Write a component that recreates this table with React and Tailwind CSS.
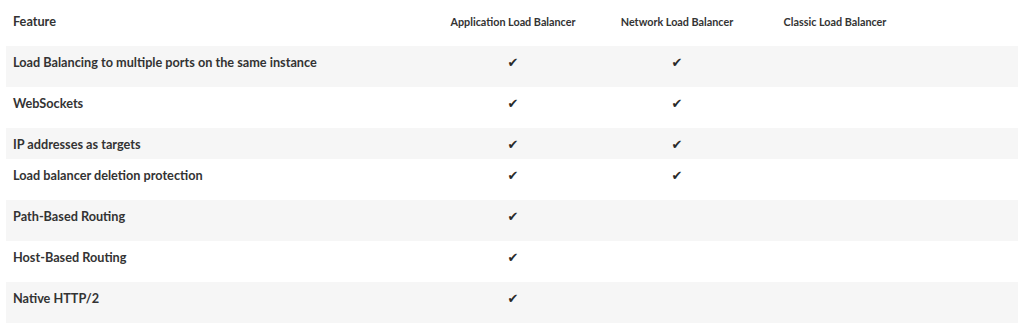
const ROWS = [
  { name: "Load Balancing to multiple ports on the same instance", alb: true, nlb: true, h: "h-[41px]" },
  { name: "WebSockets", alb: true, nlb: true, h: "h-[41px]" },
  { name: "IP addresses as targets", alb: true, nlb: true, h: "h-[31px]" },
  { name: "Load balancer deletion protection", alb: true, nlb: true, h: "h-[41px]" },
  { name: "Path-Based Routing", alb: true, nlb: false, h: "h-[41px]" },
  { name: "Host-Based Routing", alb: true, nlb: false, h: "h-[41px]" },
  { name: "Native HTTP/2", alb: true, nlb: false, h: "h-[41px]" },
];

const COLS = "grid grid-cols-[424px_166px_162px_154px_1fr]";

function Check({ on }) {
  return (
    <div className="text-center">
      {on && <span className="text-[13px] text-[#2a2a2a] font-['DejaVu_Sans',sans-serif]">✔</span>}
    </div>
  );
}

export default function App() {
  return (
    <main className="w-[1024px] h-[328px] bg-white px-[6px] font-['Lato',sans-serif] font-bold text-[12.7px] leading-4 text-[#333]">
      <div className={`${COLS} h-[46px] pt-[13px]`}>
        <div className="pl-[7px]">Feature</div>
        <div className="text-center text-[10.8px] pt-px">Application Load Balancer</div>
        <div className="text-center text-[10.8px] pt-px">Network Load Balancer</div>
        <div className="text-center text-[10.8px] pt-px">Classic Load Balancer</div>
        <div />
      </div>

      {ROWS.map((row, i) => (
        <div
          key={row.name}
          className={`${COLS} ${row.h} pt-2 ${i % 2 === 0 ? "bg-[#f6f6f6]" : "bg-white"}`}
        >
          <div className="pl-[7px]">{row.name}</div>
          <Check on={row.alb} />
          <Check on={row.nlb} />
          <Check on={false} />
          <div />
        </div>
      ))}
    </main>
  );
}
